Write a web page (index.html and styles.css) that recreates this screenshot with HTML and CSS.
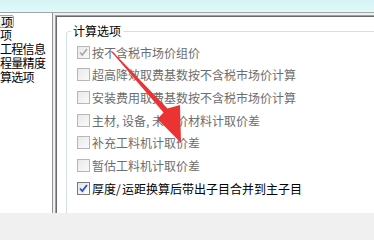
FILE: index.html
```html
<!DOCTYPE html>
<html lang="zh-CN">
<head>
<meta charset="utf-8">
<title>计算选项</title>
<link rel="stylesheet" href="styles.css">
</head>
<body>
<div class="top"></div>
<div class="main">
  <div class="tree">
    <div class="item"><span class="sel">项</span></div>
    <div class="item">项</div>
    <div class="item">工程信息</div>
    <div class="item">程量精度</div>
    <div class="item">算选项</div>
  </div>
  <div class="right">
    <div class="panel">
      <fieldset class="group">
        <legend>计算选项</legend>
        <div class="row dis"><span class="cb"><svg viewBox="0 0 11 11"><path d="M2 5.5 L4.3 8 L9 2" class="chk-g"/></svg></span><span class="lbl">按不含税市场价组价</span></div>
        <div class="row dis"><span class="cb"></span><span class="lbl">超高降效取费基数按不含税市场价计算</span></div>
        <div class="row dis"><span class="cb"></span><span class="lbl">安装费用取费基数按不含税市场价计算</span></div>
        <div class="row dis"><span class="cb"></span><span class="lbl">主材<span class="h">,</span>设备<span class="h">,</span>未计价材料计取价差</span></div>
        <div class="row dis"><span class="cb"></span><span class="lbl">补充工料机计取价差</span></div>
        <div class="row dis"><span class="cb"></span><span class="lbl">暂估工料机计取价差</span></div>
        <div class="row"><span class="cb on"><svg viewBox="0 0 11 11"><path d="M2 5.5 L4.3 8 L9 2" class="chk-b"/></svg></span><span class="lbl">厚度<span class="h">/</span>运距换算后带出子目合并到主子目</span></div>
      </fieldset>
    </div>
  </div>
</div>
<svg class="arrow" viewBox="0 0 374 213" width="374" height="213">
  <polygon points="112.5,51.5 167.5,108.5 180,105 181,143 157.5,119 163.5,112.5 112,52.5" fill="#ec3333"/>
</svg>
</body>
</html>
```
FILE: styles.css
```css
html, body {
  margin: 0;
  padding: 0;
}
body {
  width: 374px;
  height: 213px;
  overflow: hidden;
  position: relative;
  background: #f0f0f0;
  font-family: "Noto Sans CJK SC", "Noto Sans", sans-serif;
}
.top {
  height: 12px;
  background: linear-gradient(#d5f2f4, #e1fafb);
  border-bottom: 1px solid #9fa8a9;
}
.main {
  display: flex;
  height: 200px;
}
.tree {
  width: 52px;
  flex: none;
  background: #fff;
  border-right: 1px solid #8e9399;
  padding-top: 1px;
  font-size: 12px;
  letter-spacing: -0.7px;
  color: #000;
  overflow: hidden;
}
.item {
  height: 14px;
  line-height: 14px;
  white-space: nowrap;
}
.sel {
  display: inline-block;
  vertical-align: top;
  margin: 1px 0 0 -2px;
  padding: 0 1px 0 2px;
  height: 11px;
  line-height: 11px;
  border: 1px solid #a3a3a3;
  border-radius: 2px;
  background: #f1f1f1;
}
.right {
  flex: 1;
  padding: 2px 0 0 2px;
  min-width: 0;
}
.panel {
  height: 100%;
  box-sizing: border-box;
  background: #fff;
  border-top: 1px solid #a0a0a0;
  border-left: 1px solid #a0a0a0;
  box-shadow: inset 1px 1px 0 #696969;
  padding: 8px 0 0 10px;
  overflow: hidden;
}
.group {
  margin: 0;
  padding: 3px 0 0 4px;
  width: 400px;
  height: 260px;
  min-width: 0;
  border: 1px solid #d5dfe5;
  border-radius: 3px;
}
.group legend {
  padding: 0 2px;
  font-size: 12px;
  line-height: 14px;
  color: #000;
}
.row {
  display: flex;
  align-items: center;
  height: 22.67px;
  margin-left: 6px;
  font-size: 12px;
  color: #000;
  white-space: nowrap;
}
.row.dis {
  color: #6d6d6d;
}
.cb {
  flex: none;
  display: flex;
  width: 11px;
  height: 11px;
  border: 1px solid #b7b7b7;
  background: linear-gradient(135deg, #e9e9e9, #fafafa);
  margin-right: 2px;
}
.cb svg {
  width: 11px;
  height: 11px;
}
.cb.on {
  border-color: #7a7a7a;
  background: linear-gradient(135deg, #dfe6ee, #fdfdfd);
}
.chk-g {
  fill: none;
  stroke: #a9a9a9;
  stroke-width: 1.7;
}
.chk-b {
  fill: none;
  stroke: #2f4fb4;
  stroke-width: 1.8;
}
.lbl {
  line-height: 13px;
}
.h {
  display: inline-block;
  width: 6px;
}
.arrow {
  position: absolute;
  left: 0;
  top: 0;
  pointer-events: none;
}
```
